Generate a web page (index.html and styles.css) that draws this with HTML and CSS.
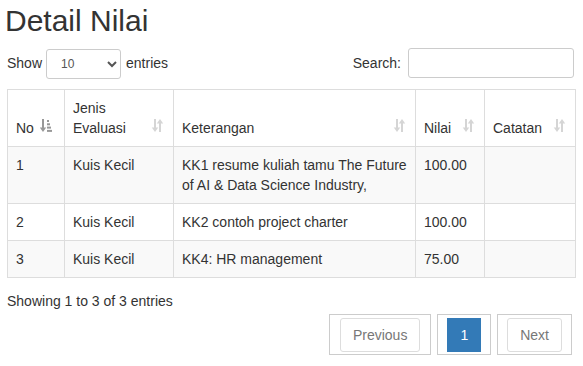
FILE: index.html
```html
<!DOCTYPE html>
<html>
<head>
<meta charset="utf-8">
<link rel="stylesheet" href="styles.css">
</head>
<body>
<div class="page">
  <h2 class="title">Detail Nilai</h2>
  <div class="controls">
    <label class="length">Show
      <select class="sel"><option>10</option><option>25</option><option>50</option><option>100</option></select>
      entries</label>
    <label class="filter">Search:<input class="search" type="search"></label>
  </div>
  <table class="grid">
    <colgroup>
      <col class="c-no"><col class="c-jenis"><col class="c-ket"><col class="c-nilai"><col class="c-cat">
    </colgroup>
    <thead>
      <tr>
        <th>No<svg class="sort active" viewBox="0 0 14 13" width="14" height="13"><path d="M2 0h2v8.5h2.2L3 13 -0.2 8.5H2z"/><rect x="7" y="1" width="2" height="2"/><rect x="7" y="4.3" width="3" height="2"/><rect x="7" y="7.6" width="4" height="2"/><rect x="7" y="10.9" width="5" height="2"/></svg></th>
        <th>Jenis<br>Evaluasi<svg class="sort" viewBox="0 0 14 13" width="14" height="13"><path d="M3 0h2v8.5h2.2L4 13 0.8 8.5H3z"/><path d="M10 13h-2V4.5H5.8L9 0l3.2 4.5H10z"/></svg></th>
        <th>Keterangan<svg class="sort" viewBox="0 0 14 13" width="14" height="13"><path d="M3 0h2v8.5h2.2L4 13 0.8 8.5H3z"/><path d="M10 13h-2V4.5H5.8L9 0l3.2 4.5H10z"/></svg></th>
        <th>Nilai<svg class="sort" viewBox="0 0 14 13" width="14" height="13"><path d="M3 0h2v8.5h2.2L4 13 0.8 8.5H3z"/><path d="M10 13h-2V4.5H5.8L9 0l3.2 4.5H10z"/></svg></th>
        <th>Catatan<svg class="sort" viewBox="0 0 14 13" width="14" height="13"><path d="M3 0h2v8.5h2.2L4 13 0.8 8.5H3z"/><path d="M10 13h-2V4.5H5.8L9 0l3.2 4.5H10z"/></svg></th>
      </tr>
    </thead>
    <tbody>
      <tr class="odd"><td>1</td><td>Kuis Kecil</td><td>KK1 resume kuliah tamu The Future of AI &amp; Data Science Industry,</td><td>100.00</td><td></td></tr>
      <tr><td>2</td><td>Kuis Kecil</td><td>KK2 contoh project charter</td><td>100.00</td><td></td></tr>
      <tr class="odd"><td>3</td><td>Kuis Kecil</td><td>KK4: HR management</td><td>75.00</td><td></td></tr>
    </tbody>
  </table>
  <div class="info">Showing 1 to 3 of 3 entries</div>
  <ul class="pager">
    <li class="item item-prev"><a class="btn disabled">Previous</a></li>
    <li class="item item-cur"><a class="btn current">1</a></li>
    <li class="item item-next"><a class="btn disabled">Next</a></li>
  </ul>
</div>
</body>
</html>
```
FILE: styles.css
```css
* { box-sizing: border-box; }
body {
  margin: 0;
  font-family: "Liberation Sans", Arial, sans-serif;
  font-size: 14px;
  line-height: 20px;
  color: #333;
  background: #fff;
}
.page { padding: 0 8px 0 7px; }
.title {
  margin: 4px 0 11px -2px;
  font-size: 30px;
  line-height: 33px;
  font-weight: normal;
}
.controls {
  display: flex;
  justify-content: space-between;
  align-items: center;
  height: 30px;
}
.length, .filter {
  display: flex;
  align-items: center;
  font-weight: normal;
}
.sel {
  width: 75px;
  height: 30px;
  margin: 1px 5px 0 4px;
  padding: 0 6px 0 10px;
  font-family: "Liberation Sans", Arial, sans-serif;
  font-size: 12px;
  color: #555;
  border: 1px solid #ccc;
  border-radius: 3px;
  background: #fff;
}
.search {
  width: 166px;
  height: 30px;
  margin-left: 7px;
  margin-right: 1px;
  padding: 5px 10px;
  font-size: 12px;
  border: 1px solid #ccc;
  border-radius: 3px;
}
.grid {
  width: 568px;
  margin-top: 11px;
  border-collapse: collapse;
  table-layout: fixed;
  border: 1px solid #ddd;
}
.c-no { width: 57px; }
.c-jenis { width: 109px; }
.c-ket { width: 242px; }
.c-nilai { width: 69px; }
.c-cat { width: 91px; }
.grid th, .grid td {
  border: 1px solid #ddd;
  padding: 8px;
  text-align: left;
  vertical-align: top;
  font-weight: normal;
}
.grid th {
  position: relative;
  vertical-align: bottom;
  padding-right: 30px;
}
.grid tr.odd td { background: #f9f9f9; }
.sort {
  position: absolute;
  right: 8px;
  bottom: 14px;
  fill: #333;
  opacity: 0.2;
}
.sort.active { opacity: 0.5; right: 10px; }
.info { margin-top: 13px; }
.pager {
  list-style: none;
  margin: 3px 3px 0 0;
  padding: 0;
  display: flex;
  justify-content: flex-end;
  gap: 6px;
}
.item {
  border: 1px solid #ccc;
  padding: 3px 10px 2px 10px;
}
.item-cur, .item-next { padding: 3px 9px 2px 9px; }
.btn {
  display: block;
  padding: 6px 12px;
  line-height: 20px;
  border: 1px solid #ddd;
  border-radius: 3px;
  color: #777;
  background: #fff;
}
.btn.current {
  background: #337ab7;
  border-color: #337ab7;
  color: #fff;
  border-radius: 0;
}
```
